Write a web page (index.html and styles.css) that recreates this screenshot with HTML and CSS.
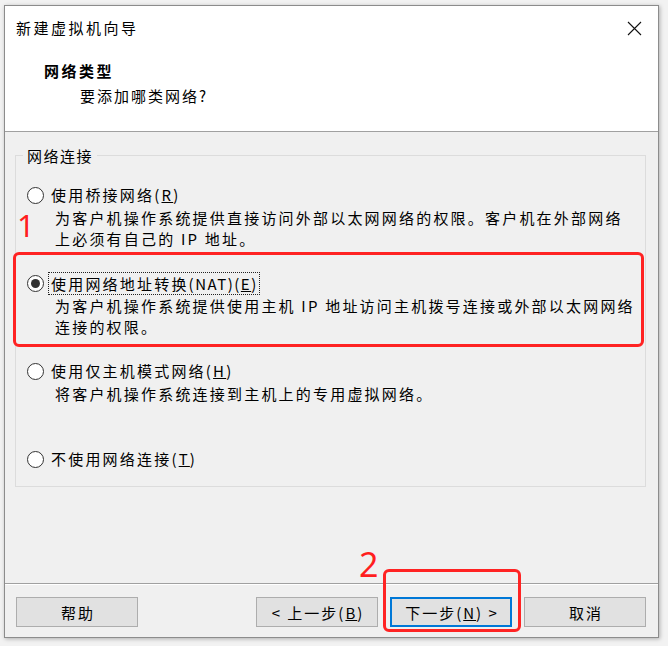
FILE: index.html
```html
<!DOCTYPE html>
<html lang="zh-CN">
<head>
<meta charset="utf-8">
<title>新建虚拟机向导</title>
<link rel="stylesheet" href="styles.css">
</head>
<body>
<div class="window">
  <div class="titlebar">
    <span class="title">新建虚拟机向导</span>
    <span class="close"><svg width="15" height="15" viewBox="0 0 15 15"><path d="M1 1L14 14M14 1L1 14" stroke="#111" stroke-width="1.1" fill="none"/></svg></span>
  </div>
  <div class="header">
    <div class="h-title">网络类型</div>
    <div class="h-sub">要添加哪类网络?</div>
  </div>
  <div class="content">
    <div class="group">
      <div class="legend">网络连接</div>
      <div class="options">
        <div class="option">
          <div class="opt-label"><span class="radio"></span><span class="text">使用桥接网络(<u>R</u>)</span></div>
          <div class="desc">为客户机操作系统提供直接访问外部以太网网络的权限。客户机在外部网络<br>上必须有自己的 IP 地址。</div>
        </div>
        <div class="option">
          <div class="opt-label"><span class="radio checked"></span><span class="text focus">使用网络地址转换<span class="latin">(NAT)(<u>E</u>)</span></span></div>
          <div class="desc">为客户机操作系统提供使用主机 IP 地址访问主机拨号连接或外部以太网网络<br>连接的权限。</div>
        </div>
        <div class="option">
          <div class="opt-label"><span class="radio"></span><span class="text">使用仅主机模式网络(<u>H</u>)</span></div>
          <div class="desc">将客户机操作系统连接到主机上的专用虚拟网络。</div>
        </div>
        <div class="option last">
          <div class="opt-label"><span class="radio"></span><span class="text">不使用网络连接(<u>T</u>)</span></div>
        </div>
      </div>
    </div>
  </div>
  <div class="footer">
    <button class="btn">帮助</button>
    <button class="btn back">&lt; 上一步(<u>B</u>)</button>
    <button class="btn default">下一步(<u>N</u>) &gt;</button>
    <button class="btn">取消</button>
  </div>
</div>
<div class="anno anno-1">1</div>
<div class="anno-box box-1"></div>
<div class="anno anno-2">2</div>
<div class="anno-box box-2"></div>
</body>
</html>
```

FILE: styles.css
```css
html, body {
  margin: 0;
}
body {
  box-sizing: border-box;
  width: 668px;
  height: 646px;
  padding: 5px 0 0 4px;
  position: relative;
  overflow: hidden;
  background: #f2f2f2;
  font-family: "Noto Sans CJK SC", "Noto Sans", sans-serif;
  font-size: 15px;
  color: #000;
}
.window {
  width: 653px;
  height: 631px;
  border: 1px solid #8c8c8c;
  background: #f0f0f0;
  box-shadow: 1px 1px 4px rgba(0, 0, 0, 0.28);
  display: flex;
  flex-direction: column;
}
.titlebar {
  height: 44px;
  background: #fff;
  display: flex;
  align-items: center;
  padding-left: 11px;
}
.title {
  letter-spacing: 2.5px;
  line-height: 22px;
}
.close {
  margin-left: auto;
  margin-right: 16px;
  display: flex;
}
.header {
  height: 81px;
  box-sizing: content-box;
  background: #fff;
  border-bottom: 1px solid #a0a0a0;
}
.h-title {
  margin-top: 10px;
  padding-left: 39px;
  line-height: 22px;
  font-weight: bold;
  letter-spacing: 2.5px;
}
.h-sub {
  margin-top: 3px;
  padding-left: 75px;
  line-height: 22px;
  letter-spacing: 2px;
}
.content {
  flex: 1;
  padding: 23px 12px 0 10px;
}
.group {
  border: 1px solid #dcdcdc;
  padding-bottom: 16px;
}
.legend {
  width: fit-content;
  margin: -11px 0 0 7px;
  padding: 0 4px;
  background: #f0f0f0;
  line-height: 22px;
  letter-spacing: 1.5px;
}
.options {
  padding: 17px 0 0 11px;
}
.option {
  height: 88px;
}
.option.last {
  height: 22px;
}
.opt-label {
  display: flex;
  align-items: center;
  height: 22px;
  line-height: 22px;
  letter-spacing: 2.2px;
  white-space: nowrap;
}
.latin {
  letter-spacing: 1.5px;
}
.radio {
  box-sizing: border-box;
  width: 17px;
  height: 17px;
  border: 1px solid #333;
  border-radius: 50%;
  background: #fff;
  margin-right: 7px;
  display: flex;
  align-items: center;
  justify-content: center;
  flex: none;
}
.radio.checked::after {
  content: "";
  width: 9px;
  height: 9px;
  border-radius: 50%;
  background: #333;
}
.text.focus {
  border: 1px dotted #222;
  padding: 0 1px 0 2px;
  margin-left: -3px;
  line-height: 21px;
}
.desc {
  margin-top: 1px;
  padding-left: 28px;
  line-height: 21px;
  letter-spacing: 2.2px;
  white-space: nowrap;
}
.footer {
  border-top: 1px solid #a0a0a0;
  box-shadow: inset 0 1px 0 #fff;
  padding: 13px 12px 10px 11px;
  display: flex;
  gap: 12px;
}
.btn {
  box-sizing: border-box;
  width: 122px;
  height: 30px;
  background: #e1e1e1;
  border: 1px solid #adadad;
  border-radius: 0;
  font-family: "Noto Sans CJK SC", "Noto Sans", sans-serif;
  font-size: 15px;
  letter-spacing: 2px;
  padding: 0 0 0 2px;
  color: #000;
}
.btn.back {
  margin-left: auto;
}
.btn.default {
  border-color: #0078d7;
  box-shadow: inset 0 0 0 1px #0078d7;
}
.anno {
  position: absolute;
  font-family: "Noto Sans", sans-serif;
  color: #ff1e1e;
}
.anno-1 {
  left: 17px;
  top: 210px;
  font-size: 31px;
  line-height: 31px;
}
.anno-2 {
  left: 359px;
  top: 547px;
  font-size: 34px;
  line-height: 34px;
}
.anno-box {
  position: absolute;
  box-sizing: border-box;
  border: 3px solid #ff2323;
  border-radius: 6px;
}
.box-1 {
  left: 13px;
  top: 252px;
  width: 631px;
  height: 95px;
}
.box-2 {
  left: 383px;
  top: 569px;
  width: 138px;
  height: 63px;
}
```
